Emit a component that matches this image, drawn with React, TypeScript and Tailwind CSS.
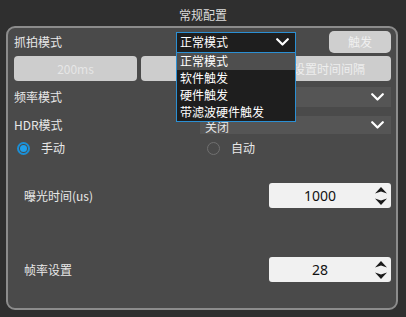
import { useState } from "react";

const items = ["正常模式", "软件触发", "硬件触发", "带滤波硬件触发"];

function Chevron({ className }: { className?: string }) {
  return (
    <svg width="13" height="8" viewBox="0 0 13 8" className={className}>
      <polyline
        points="1.2,1.2 6.5,6.5 11.8,1.2"
        fill="none"
        stroke="#ffffff"
        strokeWidth="2.2"
        strokeLinecap="round"
        strokeLinejoin="round"
      />
    </svg>
  );
}

function SpinArrows() {
  return (
    <div className="w-[20px] flex flex-col items-center justify-center gap-[4px]">
      <svg width="12" height="7" viewBox="0 0 12 7">
        <polygon points="0,6.5 6,0 12,6.5 6,4.5" fill="#1a1a1a" />
      </svg>
      <svg width="12" height="7" viewBox="0 0 12 7">
        <polygon points="0,0.5 6,2.5 12,0.5 6,7" fill="#1a1a1a" />
      </svg>
    </div>
  );
}

function SpinBox({ value }: { value: string }) {
  return (
    <div className="w-[122px] h-[25px] bg-[#f1f1f1] rounded-[3px] flex">
      <div className="flex-1 flex items-center justify-center text-[14px] text-[#111] font-['Noto_Sans','Liberation_Sans',sans-serif]">
        {value}
      </div>
      <SpinArrows />
    </div>
  );
}

function Radio({ checked, label }: { checked: boolean; label: string }) {
  return (
    <div className="flex items-center">
      {checked ? (
        <div className="w-[13px] h-[13px] rounded-full border-2 border-[#1b8fd6] flex items-center justify-center">
          <div className="w-[7px] h-[7px] rounded-full bg-[#1fa0ec]" />
        </div>
      ) : (
        <div className="w-[13px] h-[13px] rounded-full border border-[#707070]" />
      )}
      <span className="ml-[11px]">{label}</span>
    </div>
  );
}

export default function App() {
  const [mode] = useState(items[0]);
  return (
    <div className="w-[406px] h-[317px] overflow-hidden bg-[#2f2f2f] text-[12px] text-[#e8e8e8] font-['Noto_Sans_CJK_SC','Noto_Sans',sans-serif] leading-none">
      <div className="h-[26px] flex items-center justify-center pt-[3px] text-[#dcdcdc]">
        常规配置
      </div>
      <div className="ml-[6px] w-[392px] h-[284px] border-2 border-[#8c8c8c] rounded-[9px] bg-[#4a4a4a] pl-[6px] pr-[5px] pt-[3px]">
        {/* 抓拍模式 */}
        <div className="flex items-center h-[22px]">
          <div className="w-[162px]">抓拍模式</div>
          <div className="relative w-[120px] h-[21px] z-10">
            <div className="h-full bg-[#1e1e1e] border border-[#2b8fd3] flex items-center pl-[3px] pr-[6px] text-white">
              <span className="flex-1">{mode}</span>
              <Chevron />
            </div>
            <div className="absolute left-0 top-full w-[120px] bg-[#1e1e1e] border border-t-0 border-[#2b8fd3] text-white">
              {items.map((it, i) => (
                <div
                  key={it}
                  className={
                    "h-[17px] flex items-center pl-[3px] " +
                    (i === 0 ? "bg-[#4e4e4e]" : "")
                  }
                >
                  {it}
                </div>
              ))}
            </div>
          </div>
          <div className="flex-1" />
          <button className="w-[62px] h-[22px] rounded-[5px] bg-[#cfcfcf] text-[#f0f0f0]">
            触发
          </button>
        </div>

        {/* interval buttons */}
        <div className="flex gap-[4px] h-[25px] mt-[3px]">
          <button className="w-[123px] h-full rounded-[4px] bg-[#cdcdcd] text-[#e6e6e6]">
            200ms
          </button>
          <button className="w-[122px] h-full rounded-[4px] bg-[#cdcdcd]" />
          <button className="w-[124px] h-full rounded-[4px] bg-[#cdcdcd] text-[#eeeeee]">
            设置时间间隔
          </button>
        </div>

        {/* 频率模式 */}
        <div className="flex items-center h-[20px] mt-[6px]">
          <div className="w-[186px]">频率模式</div>
          <div className="flex-1 h-full bg-[#555555] flex items-center justify-end pl-[5px] pr-[7px]">
            <Chevron />
          </div>
        </div>

        {/* HDR模式 */}
        <div className="flex items-center h-[18px] mt-[9px]">
          <div className="w-[186px]">HDR模式</div>
          <div className="flex-1 h-full bg-[#555555] flex items-center pl-[5px] pr-[7px]">
            <span className="flex-1 pt-[3px]">关闭</span>
            <Chevron />
          </div>
        </div>

        {/* radios */}
        <div className="flex items-center h-[16px] mt-[6px] pl-[3px]">
          <div className="w-[190px]">
            <Radio checked label="手动" />
          </div>
          <Radio checked={false} label="自动" />
        </div>

        {/* 曝光时间 */}
        <div className="flex items-center mt-[27px] pl-[10px]">
          <div className="flex-1">曝光时间(us)</div>
          <SpinBox value="1000" />
        </div>

        {/* 帧率设置 */}
        <div className="flex items-center mt-[49px] pl-[10px]">
          <div className="flex-1">帧率设置</div>
          <SpinBox value="28" />
        </div>
      </div>
    </div>
  );
}
